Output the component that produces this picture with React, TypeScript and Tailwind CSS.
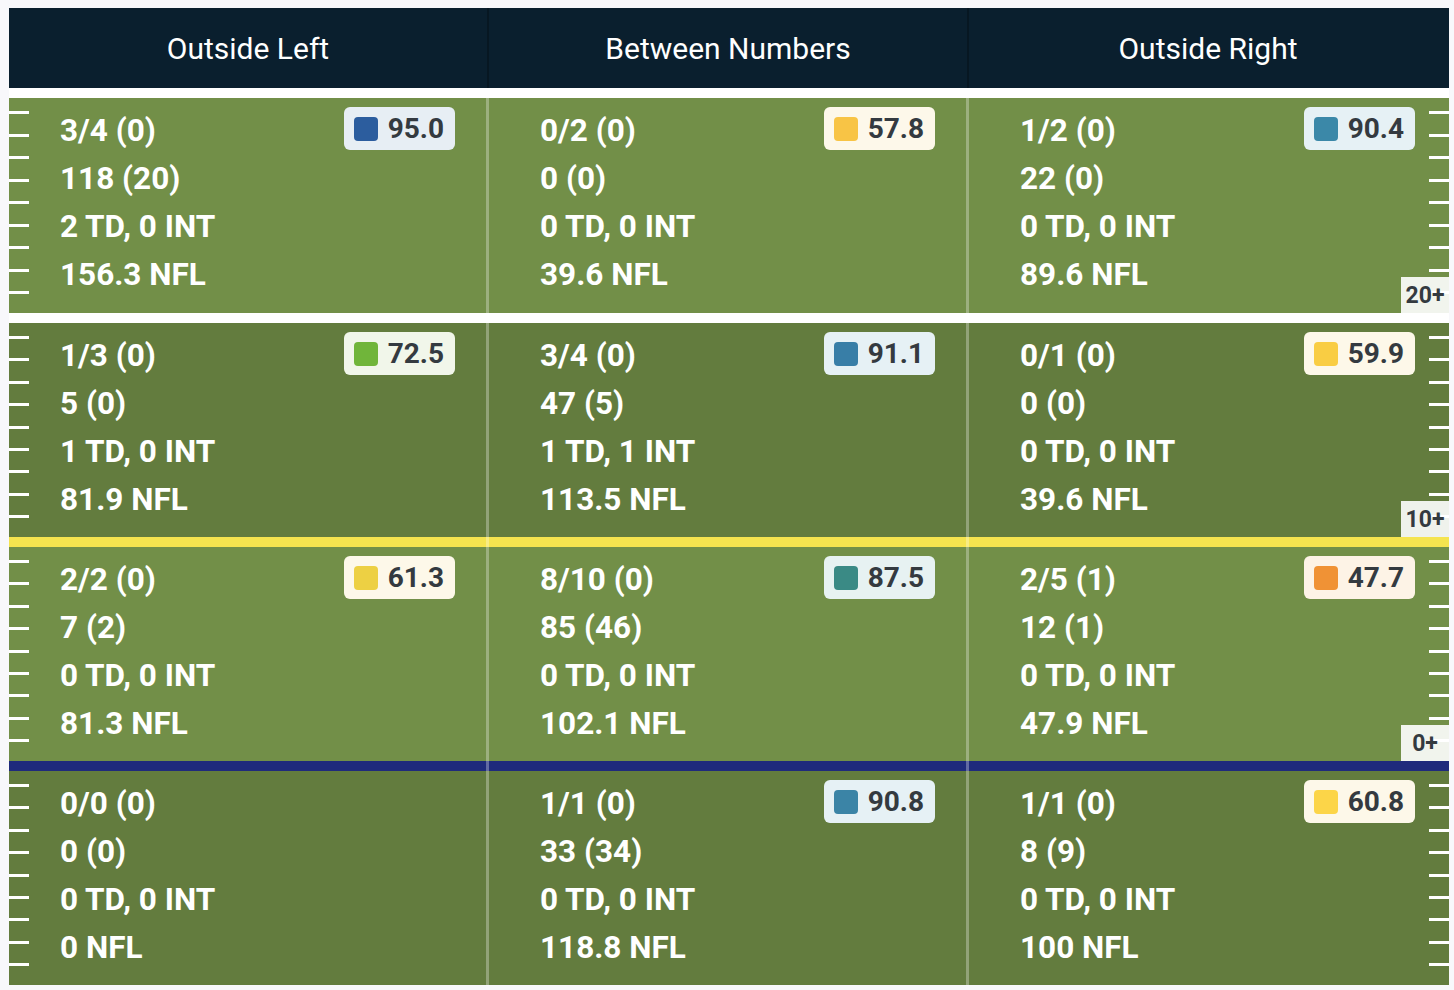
import React from 'react';

type Cell = {
  lines: string[];
  grade?: { value: string; swatch: string; bg: string };
};

type Row = {
  bg: string;
  height: string;
  label?: string;
  cells: Cell[];
};

const columns = ['Outside Left', 'Between Numbers', 'Outside Right'];

const rows: Row[] = [
  {
    bg: 'bg-[#728f48]',
    height: 'h-[215px]',
    label: '20+',
    cells: [
      { lines: ['3/4 (0)', '118 (20)', '2 TD, 0 INT', '156.3 NFL'], grade: { value: '95.0', swatch: 'bg-[#2c5d9e]', bg: 'bg-[#e7eef4]' } },
      { lines: ['0/2 (0)', '0 (0)', '0 TD, 0 INT', '39.6 NFL'], grade: { value: '57.8', swatch: 'bg-[#f8c445]', bg: 'bg-[#fdf8ea]' } },
      { lines: ['1/2 (0)', '22 (0)', '0 TD, 0 INT', '89.6 NFL'], grade: { value: '90.4', swatch: 'bg-[#3b88a8]', bg: 'bg-[#e6f1f5]' } },
    ],
  },
  {
    bg: 'bg-[#637c3e]',
    height: 'h-[214px]',
    label: '10+',
    cells: [
      { lines: ['1/3 (0)', '5 (0)', '1 TD, 0 INT', '81.9 NFL'], grade: { value: '72.5', swatch: 'bg-[#70b53a]', bg: 'bg-[#f1f6ea]' } },
      { lines: ['3/4 (0)', '47 (5)', '1 TD, 1 INT', '113.5 NFL'], grade: { value: '91.1', swatch: 'bg-[#387ea7]', bg: 'bg-[#e6f1f5]' } },
      { lines: ['0/1 (0)', '0 (0)', '0 TD, 0 INT', '39.6 NFL'], grade: { value: '59.9', swatch: 'bg-[#f9cd43]', bg: 'bg-[#fdf8e9]' } },
    ],
  },
  {
    bg: 'bg-[#728f48]',
    height: 'h-[214px]',
    label: '0+',
    cells: [
      { lines: ['2/2 (0)', '7 (2)', '0 TD, 0 INT', '81.3 NFL'], grade: { value: '61.3', swatch: 'bg-[#edd043]', bg: 'bg-[#fdf8e9]' } },
      { lines: ['8/10 (0)', '85 (46)', '0 TD, 0 INT', '102.1 NFL'], grade: { value: '87.5', swatch: 'bg-[#3a8a85]', bg: 'bg-[#e7f2f2]' } },
      { lines: ['2/5 (1)', '12 (1)', '0 TD, 0 INT', '47.9 NFL'], grade: { value: '47.7', swatch: 'bg-[#f09235]', bg: 'bg-[#fdf3e6]' } },
    ],
  },
  {
    bg: 'bg-[#637c3e]',
    height: 'h-[214px]',
    cells: [
      { lines: ['0/0 (0)', '0 (0)', '0 TD, 0 INT', '0 NFL'] },
      { lines: ['1/1 (0)', '33 (34)', '0 TD, 0 INT', '118.8 NFL'], grade: { value: '90.8', swatch: 'bg-[#3b84a6]', bg: 'bg-[#e6f1f5]' } },
      { lines: ['1/1 (0)', '8 (9)', '0 TD, 0 INT', '100 NFL'], grade: { value: '60.8', swatch: 'bg-[#fcd548]', bg: 'bg-[#fdf8e9]' } },
    ],
  },
];

// line between row i and i+1
const separators = ['bg-white', 'bg-[#f5e44f]', 'bg-[#1f2a7c]'];

function Ticks({ side }: { side: 'left' | 'right' }) {
  return (
    <div
      className={
        'absolute top-0 bottom-0 w-[20px] flex flex-col justify-between pt-[13px] pb-[19px] ' +
        (side === 'left' ? 'left-0' : 'right-0')
      }
    >
      {Array.from({ length: 9 }).map((_, i) => (
        <div key={i} className="h-[3px] bg-white" />
      ))}
    </div>
  );
}

function Grade({ value, swatch, bg }: { value: string; swatch: string; bg: string }) {
  return (
    <div className={`flex items-center gap-[10px] h-[43px] pl-[10px] pr-[11px] rounded-[6px] ${bg}`}>
      <span className={`w-[24px] h-[24px] rounded-[4px] ${swatch}`} />
      <span className="text-[28px] leading-none font-bold text-[#343a40]">{value}</span>
    </div>
  );
}

function StatRow({ row }: { row: Row }) {
  return (
    <div className={`relative grid grid-cols-3 ${row.height} ${row.bg}`}>
      {row.cells.map((c, i) => (
        <div
          key={i}
          className={
            'flex items-start justify-between pt-[9px] pl-[51px] pr-[31px] border-r-[3px] ' +
            (i < 2 ? 'border-white/30' : 'border-transparent')
          }
        >
          <div className="flex flex-col">
            {c.lines.map((l) => (
              <div key={l} className="text-[31.5px] leading-[48px] font-bold text-white">
                {l}
              </div>
            ))}
          </div>
          {c.grade && <Grade {...c.grade} />}
        </div>
      ))}
      <Ticks side="left" />
      <Ticks side="right" />
      {row.label && (
        <div className="absolute right-0 bottom-0 w-[48px] h-[36px] flex items-center justify-center pt-[2px] bg-white/90 text-[23px] font-bold text-[#343a40]">
          {row.label}
        </div>
      )}
    </div>
  );
}

export default function App() {
  return (
    <div
      className="min-h-screen bg-[#f8f8fb] pt-[8px] pl-[9px]"
      style={{ fontFamily: 'Roboto, "Noto Sans", sans-serif' }}
    >
      <div className="w-[1440px] bg-white">
        {/* Zone header */}
        <div className="grid grid-cols-3 h-[80px] bg-[#0a1f2e]">
          {columns.map((c, i) => (
            <div
              key={c}
              className={
                'flex items-center justify-center text-[30px] text-white border-r-2 ' +
                (i < 2 ? 'border-black/25' : 'border-transparent')
              }
            >
              {c}
            </div>
          ))}
        </div>
        <div className="h-[10px] bg-white" />

        {rows.map((r, i) => (
          <React.Fragment key={i}>
            <StatRow row={r} />
            {i < separators.length && (
              <div className={`grid grid-cols-3 h-[10px] ${separators[i]}`}>
                <div className="border-r-[3px] border-white/30" />
                <div className="border-r-[3px] border-white/30" />
                <div />
              </div>
            )}
          </React.Fragment>
        ))}
      </div>
    </div>
  );
}
